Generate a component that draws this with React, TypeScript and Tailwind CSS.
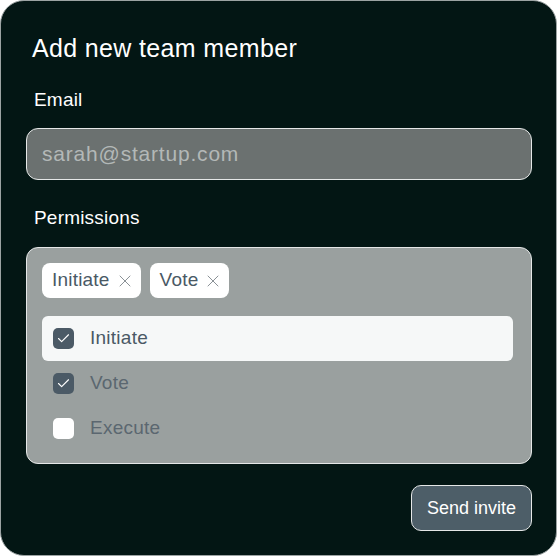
import { Check, X } from "lucide-react";

const options = [
  { label: "Initiate", checked: true, active: true },
  { label: "Vote", checked: true, active: false },
  { label: "Execute", checked: false, active: false },
];

export default function App() {
  return (
    <div className="w-[558px] h-[557px] bg-white" style={{ fontFamily: '"Liberation Sans", Arial, sans-serif' }}>
      <div className="w-[557px] h-[556px] rounded-[24px] border border-[#9ca3a3] bg-[#031614] pl-[25px] pr-[24px] pt-[32px]">
        <h2 className="px-[6px] text-[25px] leading-[30px] tracking-[0.35px] text-white">Add new team member</h2>

        <label className="mt-[26px] block px-[8px] text-[19px] leading-[22px] tracking-[0.2px] text-white">Email</label>
        <div className="mt-[17px] flex h-[52px] items-center rounded-[12px] border border-[#e5e7e7] bg-[#6b7170] px-[15px]">
          <span className="text-[21px] tracking-[0.8px] text-[#b3b8b7]">sarah@startup.com</span>
        </div>

        <label className="mt-[27px] block px-[8px] text-[19px] leading-[22px] tracking-[0.2px] text-white">Permissions</label>
        <div className="mt-[18px] h-[217px] rounded-[12px] border border-[#e5e7e7] bg-[#9aa09f] px-[15px] pt-[15px]">
          <div className="flex gap-[9px]">
            {["Initiate", "Vote"].map((t) => (
              <span key={t} className="flex h-[35px] items-center gap-[5px] rounded-[8px] bg-white pl-[10px] pr-[6px] text-[19px] tracking-[0.2px] text-[#4a5965]">
                {t}
                <X className="h-[20px] w-[20px] text-[#8a9196]" strokeWidth={1.2} />
              </span>
            ))}
          </div>
          <div className="mt-[18px] mr-[3px] flex flex-col">
            {options.map((o) => (
              <div
                key={o.label}
                className={`flex h-[45px] items-center gap-[16px] rounded-[6px] px-[11px] ${o.active ? "bg-[#f6f8f8]" : ""}`}
              >
                <span
                  className={`flex h-[21px] w-[21px] items-center justify-center rounded-[5px] ${o.checked ? "bg-[#4b5a66]" : "bg-white"}`}
                >
                  {o.checked && <Check className="h-[15px] w-[15px] text-white" strokeWidth={1.8} />}
                </span>
                <span className={`text-[19px] tracking-[0.25px] ${o.active ? "text-[#4a5965]" : "text-[#5b6770]"}`}>{o.label}</span>
              </div>
            ))}
          </div>
        </div>

        <div className="mt-[21px] flex justify-end">
          <button className="h-[46px] rounded-[10px] border border-[#e5e7e7] bg-[#4d5e68] px-[15px] text-[18px] text-white">
            Send invite
          </button>
        </div>
      </div>
    </div>
  );
}
